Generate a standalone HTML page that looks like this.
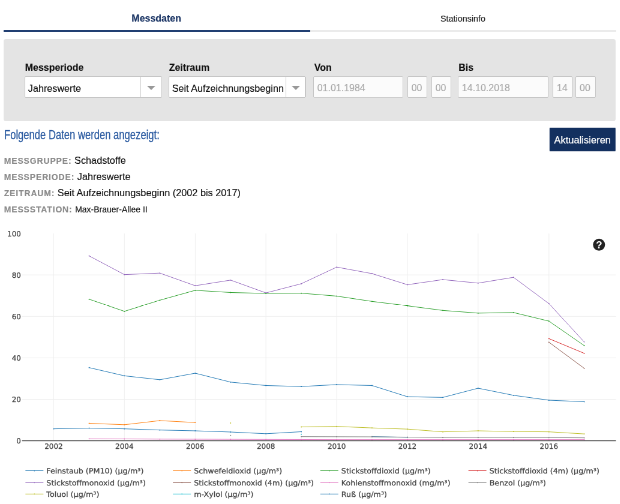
<!DOCTYPE html>
<html lang="de"><head><meta charset="utf-8"><title>Messdaten</title>
<style>
html,body{margin:0;padding:0;background:#fff;}
body{width:620px;height:504px;position:relative;overflow:hidden;}
#s{position:absolute;left:0;top:0;width:1033.34px;height:840px;transform:scale(0.6);transform-origin:0 0;will-change:transform;-webkit-text-stroke:0.2px;font-family:"Liberation Sans",Arial,Helvetica,sans-serif;color:#111;}
.abs{position:absolute;white-space:nowrap;}
.tab1{left:6px;width:510.5px;top:0;height:50.3px;border-bottom:3px solid #213f72;text-align:center;text-indent:-1.2px;font-weight:bold;font-size:16px;line-height:62.5px;color:#1a3464;}
.tab2{left:516.5px;width:510px;top:0;height:50.3px;border-bottom:3px solid #ebebeb;text-align:center;font-size:14.4px;line-height:62px;color:#222;}
.panel{left:6px;top:65px;width:1020px;height:137px;background:#e4e4e4;border-radius:4px;}
.lbl{font-weight:bold;font-size:16px;line-height:20px;color:#111;top:102.5px;}
.sel{top:127px;height:36px;background:#fff;border-radius:2px;font-size:16.2px;line-height:38.2px;color:#111;box-sizing:border-box;padding-left:5px;border:1px solid #c6c6c6;overflow:hidden;}
.sel .sep{position:absolute;top:0;bottom:0;width:1px;background:#ccc;}
.sel .arr{position:absolute;top:15px;width:0;height:0;border-left:7.4px solid transparent;border-right:7.4px solid transparent;border-top:7.6px solid #999;}
.inp{top:127px;height:36px;background:#fbfbfb;border:1px solid #c6c6c6;border-radius:2px;font-size:16px;line-height:37.2px;color:#aaa;box-sizing:border-box;padding-left:6px;}
.h{left:6.7px;top:211.5px;font-size:21.6px;line-height:25px;color:#2a5aa0;-webkit-text-stroke:0.35px #2a5aa0;transform:scaleX(0.77);transform-origin:0 0;}
.btn{left:915.5px;top:213px;width:110.5px;height:39px;background:#13305f;color:#fff;font-size:16.5px;line-height:40px;text-align:center;-webkit-text-stroke:0.25px #fff;border-radius:1px;}
.row{left:6.7px;font-size:16.3px;line-height:20px;color:#111;}
.row b{font-size:14px;letter-spacing:0.85px;color:#8a8a8a;font-weight:bold;}
.row.s span{font-size:14px;}
.chart{position:absolute;left:0;top:366.67px;}
.tk text{font-family:"DejaVu Sans",Verdana,sans-serif;font-size:7.2px;fill:#444;stroke:#444;stroke-width:0.18px;}
.q{font-family:"Liberation Sans",sans-serif;font-weight:bold;font-size:10.2px;fill:#fff;}
</style></head><body><div id="s">
<div class="abs tab1">Messdaten</div>
<div class="abs tab2">Stationsinfo</div>
<div class="abs panel"></div>
<div class="abs lbl" style="left:41.67px">Messperiode</div>
<div class="abs lbl" style="left:281.67px">Zeitraum</div>
<div class="abs lbl" style="left:523.67px">Von</div>
<div class="abs lbl" style="left:764.17px">Bis</div>
<div class="abs sel" style="left:40.83px;width:228.83px">Jahreswerte<i class="sep" style="left:192.67px"></i><i class="arr" style="left:203.17px"></i></div>
<div class="abs sel" style="left:280.67px;width:229.0px">Seit Aufzeichnungsbeginn<i class="sep" style="left:194.0px"></i><i class="arr" style="left:204.17px"></i></div>
<div class="abs inp" style="left:521.67px;width:150.67px">01.01.1984</div>
<div class="abs inp" style="left:678.67px;width:33.0px">00</div>
<div class="abs inp" style="left:718.67px;width:33.0px">00</div>
<div class="abs inp" style="left:762.83px;width:151.17px">14.10.2018</div>
<div class="abs inp" style="left:921.0px;width:32.67px">14</div>
<div class="abs inp" style="left:959.0px;width:34.0px">00</div>
<div class="abs h">Folgende Daten werden angezeigt:</div>
<div class="abs btn">Aktualisieren</div>
<div class="abs row" style="top:257.17px"><b>MESSGRUPPE:</b> <span>Schadstoffe</span></div>
<div class="abs row" style="top:284.0px"><b>MESSPERIODE:</b> <span>Jahreswerte</span></div>
<div class="abs row" style="top:310.83px"><b>ZEITRAUM:</b> <span>Seit Aufzeichnungsbeginn (2002 bis 2017)</span></div>
<div class="abs row s" style="top:338.33px"><b>MESSSTATION:</b> <span>Max-Brauer-Allee II</span></div>
<svg class="chart" width="1033.34" height="473.34" viewBox="0 220 620 284">
<g stroke="#eeeeee" stroke-width="0.6" fill="none"><line x1="53.7" x2="53.7" y1="233.3" y2="440.5"/><line x1="124.4" x2="124.4" y1="233.3" y2="440.5"/><line x1="195.2" x2="195.2" y1="233.3" y2="440.5"/><line x1="265.9" x2="265.9" y1="233.3" y2="440.5"/><line x1="336.7" x2="336.7" y1="233.3" y2="440.5"/><line x1="407.4" x2="407.4" y1="233.3" y2="440.5"/><line x1="478.1" x2="478.1" y1="233.3" y2="440.5"/><line x1="548.9" x2="548.9" y1="233.3" y2="440.5"/><line x1="22" x2="616" y1="399.1" y2="399.1"/><line x1="22" x2="616" y1="357.6" y2="357.6"/><line x1="22" x2="616" y1="316.2" y2="316.2"/><line x1="22" x2="616" y1="274.7" y2="274.7"/></g>
<polyline fill="none" stroke="#9467bd" stroke-width="0.6" stroke-linejoin="round" points="89.1,255.7 124.4,274.4 159.8,272.9 195.2,285.5 230.6,279.9 265.9,292.7 301.3,283.5 336.7,266.9 372.0,273.4 407.4,284.5 442.8,279.4 478.1,282.9 513.5,277.1 548.9,303.4 584.2,341.7"/>
<g fill="#9467bd"><circle cx="89.1" cy="255.7" r="0.55"/><circle cx="124.4" cy="274.4" r="0.55"/><circle cx="159.8" cy="272.9" r="0.55"/><circle cx="195.2" cy="285.5" r="0.55"/><circle cx="230.6" cy="279.9" r="0.55"/><circle cx="265.9" cy="292.7" r="0.55"/><circle cx="301.3" cy="283.5" r="0.55"/><circle cx="336.7" cy="266.9" r="0.55"/><circle cx="372.0" cy="273.4" r="0.55"/><circle cx="407.4" cy="284.5" r="0.55"/><circle cx="442.8" cy="279.4" r="0.55"/><circle cx="478.1" cy="282.9" r="0.55"/><circle cx="513.5" cy="277.1" r="0.55"/><circle cx="548.9" cy="303.4" r="0.55"/><circle cx="584.2" cy="341.7" r="0.55"/></g>
<polyline fill="none" stroke="#2ca02c" stroke-width="0.6" stroke-linejoin="round" points="89.1,299 124.4,311.1 159.8,300 195.2,290.1 230.6,292.3 265.9,293.2 301.3,293 336.7,295.9 372.0,301.2 407.4,305.6 442.8,310.2 478.1,312.9 513.5,312.3 548.9,320.9 584.2,345.4"/>
<g fill="#2ca02c"><circle cx="89.1" cy="299" r="0.55"/><circle cx="124.4" cy="311.1" r="0.55"/><circle cx="159.8" cy="300" r="0.55"/><circle cx="195.2" cy="290.1" r="0.55"/><circle cx="230.6" cy="292.3" r="0.55"/><circle cx="265.9" cy="293.2" r="0.55"/><circle cx="301.3" cy="293" r="0.55"/><circle cx="336.7" cy="295.9" r="0.55"/><circle cx="372.0" cy="301.2" r="0.55"/><circle cx="407.4" cy="305.6" r="0.55"/><circle cx="442.8" cy="310.2" r="0.55"/><circle cx="478.1" cy="312.9" r="0.55"/><circle cx="513.5" cy="312.3" r="0.55"/><circle cx="548.9" cy="320.9" r="0.55"/><circle cx="584.2" cy="345.4" r="0.55"/></g>
<polyline fill="none" stroke="#d62728" stroke-width="0.6" stroke-linejoin="round" points="548.9,338.4 584.2,353.1"/>
<g fill="#d62728"><circle cx="548.9" cy="338.4" r="0.55"/><circle cx="584.2" cy="353.1" r="0.55"/></g>
<polyline fill="none" stroke="#8c564b" stroke-width="0.6" stroke-linejoin="round" points="548.9,342 584.2,368.1"/>
<g fill="#8c564b"><circle cx="548.9" cy="342" r="0.55"/><circle cx="584.2" cy="368.1" r="0.55"/></g>
<polyline fill="none" stroke="#1f77b4" stroke-width="0.6" stroke-linejoin="round" points="89.1,367.4 124.4,375.6 159.8,379.5 195.2,373 230.6,381.9 265.9,385.3 301.3,386.3 336.7,384.4 372.0,385.3 407.4,396.5 442.8,397.2 478.1,388 513.5,395.1 548.9,400 584.2,401.5"/>
<g fill="#1f77b4"><circle cx="89.1" cy="367.4" r="0.55"/><circle cx="124.4" cy="375.6" r="0.55"/><circle cx="159.8" cy="379.5" r="0.55"/><circle cx="195.2" cy="373" r="0.55"/><circle cx="230.6" cy="381.9" r="0.55"/><circle cx="265.9" cy="385.3" r="0.55"/><circle cx="301.3" cy="386.3" r="0.55"/><circle cx="336.7" cy="384.4" r="0.55"/><circle cx="372.0" cy="385.3" r="0.55"/><circle cx="407.4" cy="396.5" r="0.55"/><circle cx="442.8" cy="397.2" r="0.55"/><circle cx="478.1" cy="388" r="0.55"/><circle cx="513.5" cy="395.1" r="0.55"/><circle cx="548.9" cy="400" r="0.55"/><circle cx="584.2" cy="401.5" r="0.55"/></g>
<polyline fill="none" stroke="#ff7f0e" stroke-width="0.6" stroke-linejoin="round" points="89.1,423.1 124.4,424.5 159.8,420.4 195.2,422.3"/>
<g fill="#ff7f0e"><circle cx="89.1" cy="423.1" r="0.55"/><circle cx="124.4" cy="424.5" r="0.55"/><circle cx="159.8" cy="420.4" r="0.55"/><circle cx="195.2" cy="422.3" r="0.55"/></g>
<polyline fill="none" stroke="#1f77b4" stroke-width="0.6" stroke-linejoin="round" points="53.7,428.6 89.1,427.9 124.4,428.6 159.8,429.8 195.2,430.6 230.6,431.8 265.9,433.5 301.3,431.5"/>
<g fill="#1f77b4"><circle cx="53.7" cy="428.6" r="0.55"/><circle cx="89.1" cy="427.9" r="0.55"/><circle cx="124.4" cy="428.6" r="0.55"/><circle cx="159.8" cy="429.8" r="0.55"/><circle cx="195.2" cy="430.6" r="0.55"/><circle cx="230.6" cy="431.8" r="0.55"/><circle cx="265.9" cy="433.5" r="0.55"/><circle cx="301.3" cy="431.5" r="0.55"/></g>
<polyline fill="none" stroke="#1f77b4" stroke-width="0.6" stroke-linejoin="round" points="372.0,436.4 407.4,437.1"/>
<g fill="#1f77b4"><circle cx="372.0" cy="436.4" r="0.55"/><circle cx="407.4" cy="437.1" r="0.55"/></g>
<polyline fill="none" stroke="#bcbd22" stroke-width="0.6" stroke-linejoin="round" points="301.3,426.7 336.7,426.2 372.0,427.7 407.4,428.9 442.8,431.6 478.1,430.6 513.5,431.3 548.9,431.6 584.2,433.7"/>
<g fill="#bcbd22"><circle cx="301.3" cy="426.7" r="0.55"/><circle cx="336.7" cy="426.2" r="0.55"/><circle cx="372.0" cy="427.7" r="0.55"/><circle cx="407.4" cy="428.9" r="0.55"/><circle cx="442.8" cy="431.6" r="0.55"/><circle cx="478.1" cy="430.6" r="0.55"/><circle cx="513.5" cy="431.3" r="0.55"/><circle cx="548.9" cy="431.6" r="0.55"/><circle cx="584.2" cy="433.7" r="0.55"/></g>
<polyline fill="none" stroke="#7f7f7f" stroke-width="0.6" stroke-linejoin="round" points="301.3,436.4 336.7,436.5 372.0,436.6 407.4,436.9 442.8,437.3 478.1,437.2 513.5,437.3 548.9,437.4 584.2,437.6"/>
<g fill="#7f7f7f"><circle cx="301.3" cy="436.4" r="0.55"/><circle cx="336.7" cy="436.5" r="0.55"/><circle cx="372.0" cy="436.6" r="0.55"/><circle cx="407.4" cy="436.9" r="0.55"/><circle cx="442.8" cy="437.3" r="0.55"/><circle cx="478.1" cy="437.2" r="0.55"/><circle cx="513.5" cy="437.3" r="0.55"/><circle cx="548.9" cy="437.4" r="0.55"/><circle cx="584.2" cy="437.6" r="0.55"/></g>
<polyline fill="none" stroke="#e377c2" stroke-width="0.6" stroke-linejoin="round" points="89.1,438.6 124.4,438.7 159.8,438.9 195.2,439.0 230.6,439.1 265.9,439.2 301.3,439.3 336.7,439.4 372.0,439.4 407.4,439.4 442.8,439.4 478.1,439.4 513.5,439.4 548.9,439.4 584.2,439.4"/>
<g fill="#e377c2"><circle cx="89.1" cy="438.6" r="0.55"/><circle cx="124.4" cy="438.7" r="0.55"/><circle cx="159.8" cy="438.9" r="0.55"/><circle cx="195.2" cy="439.0" r="0.55"/><circle cx="230.6" cy="439.1" r="0.55"/><circle cx="265.9" cy="439.2" r="0.55"/><circle cx="301.3" cy="439.3" r="0.55"/><circle cx="336.7" cy="439.4" r="0.55"/><circle cx="372.0" cy="439.4" r="0.55"/><circle cx="407.4" cy="439.4" r="0.55"/><circle cx="442.8" cy="439.4" r="0.55"/><circle cx="478.1" cy="439.4" r="0.55"/><circle cx="513.5" cy="439.4" r="0.55"/><circle cx="548.9" cy="439.4" r="0.55"/><circle cx="584.2" cy="439.4" r="0.55"/></g>
<circle cx="230.6" cy="422.8" r="0.55" fill="#bcbd22"/>
<circle cx="230.6" cy="435.2" r="0.55" fill="#7f7f7f"/>
<circle cx="301.3" cy="434.0" r="0.55" fill="#17becf"/>
<line x1="22" x2="616" y1="440.5" y2="440.5" stroke="#444" stroke-width="0.9"/>
<g class="tk"><text x="53.7" y="448.9" text-anchor="middle">2002</text><text x="124.4" y="448.9" text-anchor="middle">2004</text><text x="195.2" y="448.9" text-anchor="middle">2006</text><text x="265.9" y="448.9" text-anchor="middle">2008</text><text x="336.7" y="448.9" text-anchor="middle">2010</text><text x="407.4" y="448.9" text-anchor="middle">2012</text><text x="478.1" y="448.9" text-anchor="middle">2014</text><text x="548.9" y="448.9" text-anchor="middle">2016</text><text x="21" y="443.4" text-anchor="end">0</text><text x="21" y="402.0" text-anchor="end">20</text><text x="21" y="360.5" text-anchor="end">40</text><text x="21" y="319.1" text-anchor="end">60</text><text x="21" y="277.6" text-anchor="end">80</text><text x="21" y="236.2" text-anchor="end">100</text></g>
<g class="tk"><line x1="25.4" x2="43.4" y1="470.5" y2="470.5" stroke="#1f77b4" stroke-width="0.6"/><circle cx="34.4" cy="470.5" r="0.55" fill="#1f77b4"/><text transform="translate(46.4 473.2) scale(1.06 1)">Feinstaub (PM10) (µg/m³)</text><line x1="172.9" x2="190.9" y1="470.5" y2="470.5" stroke="#ff7f0e" stroke-width="0.6"/><circle cx="181.9" cy="470.5" r="0.55" fill="#ff7f0e"/><text transform="translate(193.9 473.2) scale(1.06 1)">Schwefeldioxid (µg/m³)</text><line x1="320.3" x2="338.3" y1="470.5" y2="470.5" stroke="#2ca02c" stroke-width="0.6"/><circle cx="329.3" cy="470.5" r="0.55" fill="#2ca02c"/><text transform="translate(341.3 473.2) scale(1.06 1)">Stickstoffdioxid (µg/m³)</text><line x1="468.4" x2="486.4" y1="470.5" y2="470.5" stroke="#d62728" stroke-width="0.6"/><circle cx="477.4" cy="470.5" r="0.55" fill="#d62728"/><text transform="translate(489.4 473.2) scale(1.06 1)">Stickstoffdioxid (4m) (µg/m³)</text><line x1="25.4" x2="43.4" y1="482.4" y2="482.4" stroke="#9467bd" stroke-width="0.6"/><circle cx="34.4" cy="482.4" r="0.55" fill="#9467bd"/><text transform="translate(46.4 485.1) scale(1.06 1)">Stickstoffmonoxid (µg/m³)</text><line x1="172.9" x2="190.9" y1="482.4" y2="482.4" stroke="#8c564b" stroke-width="0.6"/><circle cx="181.9" cy="482.4" r="0.55" fill="#8c564b"/><text transform="translate(193.9 485.1) scale(1.06 1)">Stickstoffmonoxid (4m) (µg/m³)</text><line x1="320.3" x2="338.3" y1="482.4" y2="482.4" stroke="#e377c2" stroke-width="0.6"/><circle cx="329.3" cy="482.4" r="0.55" fill="#e377c2"/><text transform="translate(341.3 485.1) scale(1.06 1)">Kohlenstoffmonoxid (mg/m³)</text><line x1="468.4" x2="486.4" y1="482.4" y2="482.4" stroke="#7f7f7f" stroke-width="0.6"/><circle cx="477.4" cy="482.4" r="0.55" fill="#7f7f7f"/><text transform="translate(489.4 485.1) scale(1.06 1)">Benzol (µg/m³)</text><line x1="25.4" x2="43.4" y1="493.8" y2="493.8" stroke="#bcbd22" stroke-width="0.6"/><circle cx="34.4" cy="493.8" r="0.55" fill="#bcbd22"/><text transform="translate(46.4 496.5) scale(1.06 1)">Toluol (µg/m³)</text><line x1="172.9" x2="190.9" y1="493.8" y2="493.8" stroke="#17becf" stroke-width="0.6"/><circle cx="181.9" cy="493.8" r="0.55" fill="#17becf"/><text transform="translate(193.9 496.5) scale(1.06 1)">m-Xylol (µg/m³)</text><line x1="320.3" x2="338.3" y1="493.8" y2="493.8" stroke="#1f77b4" stroke-width="0.6"/><circle cx="329.3" cy="493.8" r="0.55" fill="#1f77b4"/><text transform="translate(341.3 496.5) scale(1.06 1)">Ruß (µg/m³)</text></g>
<circle cx="599" cy="244.5" r="6" fill="#222"/><text x="599" y="248.3" text-anchor="middle" class="q">?</text>
</svg>
</div></body></html>
